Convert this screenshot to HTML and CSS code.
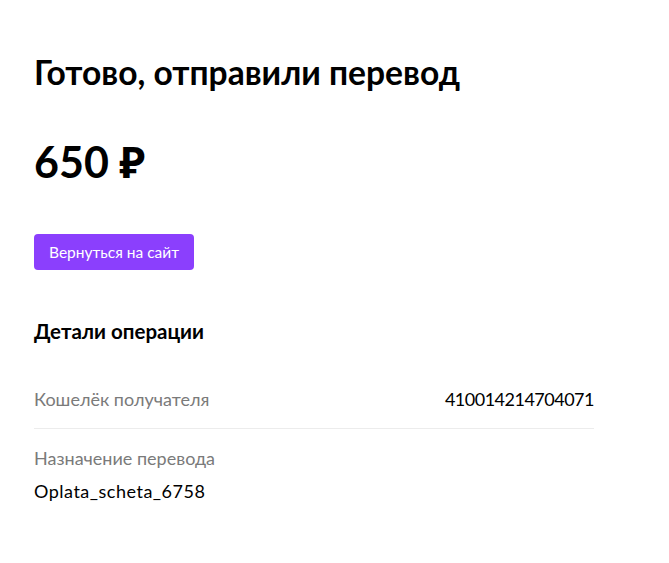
FILE: index.html
```html
<!DOCTYPE html>
<html lang="ru">
<head>
    <meta charset="UTF-8">
    <meta name="viewport" content="width=device-width, initial-scale=1.0">
    <title>Перевод отправлен</title>
    <link rel="stylesheet" href="styles.css">
</head>
<body>
    <main class="page">
        <h1 class="title">Готово, отправили перевод</h1>
        <div class="amount">650 ₽</div>
        <a class="back-button" href="#">Вернуться на сайт</a>

        <section class="details">
            <h2 class="details-title">Детали операции</h2>
            <div class="detail-row">
                <span class="detail-label">Кошелёк получателя</span>
                <span class="detail-value wallet">410014214704071</span>
            </div>
            <div class="detail-block">
                <div class="detail-label">Назначение перевода</div>
                <div class="detail-value purpose">Oplata_scheta_6758</div>
            </div>
        </section>
    </main>
</body>
</html>
```

FILE: styles.css
```css
body {
    font-family: Lato, "Noto Sans", sans-serif;
    margin: 0;
    padding: 0;
    background-color: #fff;
    color: #000;
}

.page {
    width: 560px;
    padding: 50px 34px;
}

.title {
    font-size: 33.6px;
    font-weight: 700;
    line-height: 44px;
    margin: 0;
}

.amount {
    font-size: 43px;
    font-weight: 700;
    line-height: 48px;
    margin-top: 44px;
}

.back-button {
    display: inline-block;
    margin-top: 48px;
    height: 36px;
    line-height: 36px;
    padding: 0 15px;
    border-radius: 4px;
    background-color: #8b3ffd;
    color: #fff;
    font-size: 15.5px;
    text-decoration: none;
}

.details {
    margin-top: 48px;
}

.details-title {
    font-size: 20.5px;
    font-weight: 700;
    line-height: 26px;
    margin: 0 0 44px;
}

.detail-row {
    display: flex;
    justify-content: space-between;
    align-items: center;
    padding-bottom: 18px;
    border-bottom: 1px solid #ececec;
}

.detail-block {
    padding-top: 18px;
}

.detail-label {
    color: #7a7a7a;
    font-size: 18px;
    line-height: 22px;
}

.detail-value {
    font-size: 18px;
    line-height: 22px;
}

.wallet {
    letter-spacing: -0.5px;
}

.purpose {
    letter-spacing: 0.5px;
}

.detail-block .detail-value {
    margin-top: 11px;
}
```
